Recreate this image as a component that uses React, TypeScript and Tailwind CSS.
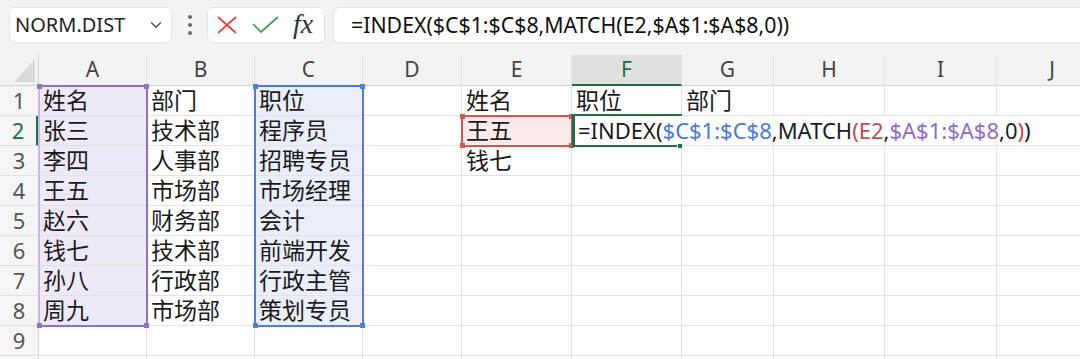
import { ChevronDown } from 'lucide-react';

const FONT = '"Noto Sans", "Noto Sans CJK SC", sans-serif';

const columns = ['A', 'B', 'C', 'D', 'E', 'F', 'G', 'H', 'I', 'J'];

const cells: Record<string, string> = {
  A1: '姓名', A2: '张三', A3: '李四', A4: '王五', A5: '赵六', A6: '钱七', A7: '孙八', A8: '周九',
  B1: '部门', B2: '技术部', B3: '人事部', B4: '市场部', B5: '财务部', B6: '技术部', B7: '行政部', B8: '市场部',
  C1: '职位', C2: '程序员', C3: '招聘专员', C4: '市场经理', C5: '会计', C6: '前端开发', C7: '行政主管', C8: '策划专员',
  E1: '姓名', F1: '职位', G1: '部门', E2: '王五', E3: '钱七',
};

function cellBg(col: string, row: number) {
  if (col === 'A' && row <= 8) return 'bg-[#eee9f7]';
  if (col === 'C' && row <= 8) return 'bg-[#e9eef9]';
  if (col === 'E' && row === 2) return 'bg-[#fbeaea]';
  return 'bg-white';
}

// cells the formula in F2 runs over: no gridline on their right
function overflowed(col: string, row: number) {
  return row === 2 && ['F', 'G', 'H', 'I'].includes(col);
}

function Handle({ className }: { className: string }) {
  return <span className={`absolute w-[5px] h-[5px] ${className}`} />;
}

function Formula() {
  return (
    <span className="whitespace-nowrap">
      =INDEX(<span className="text-[#4a7bd0]">$C$1:$C$8</span>,MATCH
      <span className="text-[#c9484a]">(E2</span>,
      <span className="text-[#8e6cc6]">$A$1:$A$8</span>,0<span className="text-[#c9484a]">)</span>)
    </span>
  );
}

function Toolbar() {
  return (
    <div className="h-[55px] bg-[#f3f3f3] flex items-start pt-[7px]">
      <div className="ml-[9px] w-[163px] h-[36px] bg-white rounded-md border border-[#e6e6e6] flex items-center justify-between pl-[5px] pr-[6px]">
        <span className="text-[20px] text-[#222]">NORM.DIST</span>
        <ChevronDown className="w-[18px] h-[18px] text-[#444]" strokeWidth={1.6} />
      </div>
      <div className="w-[35px] h-[36px] flex flex-col items-center justify-center gap-[4px]">
        <span className="w-[4px] h-[4px] rounded-full bg-[#666]" />
        <span className="w-[4px] h-[4px] rounded-full bg-[#666]" />
        <span className="w-[4px] h-[4px] rounded-full bg-[#666]" />
      </div>
      <div className="w-[118px] h-[36px] bg-white rounded-md border border-[#e6e6e6] flex items-center pl-[8px] gap-[14px]">
        <svg width="22" height="20" viewBox="0 0 22 20" fill="none" stroke="#e0443e" strokeWidth="1.7">
          <path d="M2 2 L20 18 M20 2 L2 18" />
        </svg>
        <svg width="27" height="18" viewBox="0 0 27 18" fill="none" stroke="#3e9e52" strokeWidth="1.7">
          <path d="M1 8 L9 16 L26 1" />
        </svg>
        <span className="text-[28px] italic text-[#333] leading-none -mt-[3px]" style={{ fontFamily: '"Liberation Serif", serif' }}>
          fx
        </span>
      </div>
      <div className="ml-[8px] flex-1 h-[36px] bg-white rounded-l-md border border-r-0 border-[#e6e6e6] flex items-center pl-[17px]">
        <span className="text-[21.3px] text-[#111] whitespace-nowrap">=INDEX($C$1:$C$8,MATCH(E2,$A$1:$A$8,0))</span>
      </div>
    </div>
  );
}

function Sheet() {
  const rows = Array.from({ length: 10 }, (_, i) => i + 1);
  return (
    <div className="grid grid-cols-[39px_108px_108px_108px_99px_110px_110px_92px_111px_112px_111px] grid-rows-[31px_repeat(10,30px)]">
      {/* corner */}
      <div className="bg-[#f3f3f3] border-r border-b border-[#d4d4d4] flex items-end justify-end pr-[2px] pb-[3px]" style={{ gridRow: 1, gridColumn: 1 }}>
        <svg width="22" height="23" viewBox="0 0 22 23">
          <path d="M21 0 L21 23 L0 23 Z" fill="#d9d9d9" />
        </svg>
      </div>

      {columns.map((c, ci) => (
        <div
          key={c}
          className={`flex items-center justify-center text-[21px] border-r border-[#e2e2e2] ${
            c === 'F'
              ? 'bg-[#e0e0e0] text-[#1e6e42] border-b-2 border-b-[#1e6e42]'
              : 'bg-[#f3f3f3] text-[#444] border-b border-b-[#d4d4d4]'
          }`}
          style={{ gridRow: 1, gridColumn: ci + 2 }}
        >
          {c}
        </div>
      ))}

      {rows.map((r) => (
        <div
          key={`h${r}`}
          className={`bg-[#f5f5f5] flex items-center justify-center text-[22px] border-b border-[#e2e2e2] ${
            r === 2 ? 'text-[#1e6e42] border-r-[3px] border-r-[#1e6e42]' : 'text-[#555] border-r border-r-[#d4d4d4]'
          }`}
          style={{ gridRow: r + 1, gridColumn: 1 }}
        >
          {r < 10 ? r : ''}
        </div>
      ))}

      {rows.map((r) =>
        columns.map((c, ci) => (
          <div
            key={`${c}${r}`}
            className={`flex items-center pl-[4px] text-[23px] text-[#1a1a1a] border-b border-[#e2e2e2] ${cellBg(c, r)} ${
              overflowed(c, r) ? '' : 'border-r'
            } ${c === 'F' && r === 2 ? 'relative z-[1]' : ''}`}
            style={{ gridRow: r + 1, gridColumn: ci + 2 }}
          >
            {c === 'F' && r === 2 ? (
              <span className="pl-[2px] text-[22px]">
                <Formula />
              </span>
            ) : (
              cells[`${c}${r}`]
            )}
          </div>
        ))
      )}

      {/* range A1:A8 */}
      <div className="relative z-[2] -ml-px -mt-px -mr-[1px] -mb-[1px] border-2 border-[#9270c8] border-l-[#c9b8e4] pointer-events-none" style={{ gridRow: '2 / 10', gridColumn: 2 }}>
        <Handle className="-left-[3px] -top-[3px] bg-[#9270c8]" />
        <Handle className="-right-[3px] -top-[3px] bg-[#9270c8]" />
        <Handle className="-left-[3px] -bottom-[3px] bg-[#9270c8]" />
        <Handle className="-right-[3px] -bottom-[3px] bg-[#9270c8]" />
      </div>

      {/* range C1:C8 */}
      <div className="relative z-[2] -ml-[1px] -mt-px -mr-[1px] -mb-[1px] border-2 border-[#4d7fd2] pointer-events-none" style={{ gridRow: '2 / 10', gridColumn: 4 }}>
        <Handle className="-left-[3px] -top-[3px] bg-[#4d7fd2]" />
        <Handle className="-right-[3px] -top-[3px] bg-[#4d7fd2]" />
        <Handle className="-left-[3px] -bottom-[3px] bg-[#4d7fd2]" />
        <Handle className="-right-[3px] -bottom-[3px] bg-[#4d7fd2]" />
      </div>

      {/* E2 reference */}
      <div className="relative z-[2] -ml-[1px] -mt-px -mr-[1px] -mb-[1px] border-2 border-[#d35454] pointer-events-none" style={{ gridRow: 3, gridColumn: 6 }}>
        <Handle className="-left-[3px] -top-[3px] bg-[#d35454]" />
        <Handle className="-right-[3px] -top-[3px] bg-[#d35454]" />
        <Handle className="-left-[3px] -bottom-[3px] bg-[#d35454]" />
        <Handle className="-right-[3px] -bottom-[3px] bg-[#d35454]" />
      </div>

      {/* active cell F2 */}
      <div className="relative z-[2] -mt-[2px] -mb-[1px] border-t-2 border-b-2 border-l-[3px] border-[#1e6e42] pointer-events-none" style={{ gridRow: 3, gridColumn: 7 }}>
        <span className="absolute -right-[1px] -bottom-[4px] w-[6px] h-[6px] bg-[#1e6e42] border border-white" />
      </div>
    </div>
  );
}

export default function App() {
  return (
    <div className="w-[1080px] h-[359px] overflow-hidden bg-white" style={{ fontFamily: FONT }}>
      <Toolbar />
      <Sheet />
    </div>
  );
}
